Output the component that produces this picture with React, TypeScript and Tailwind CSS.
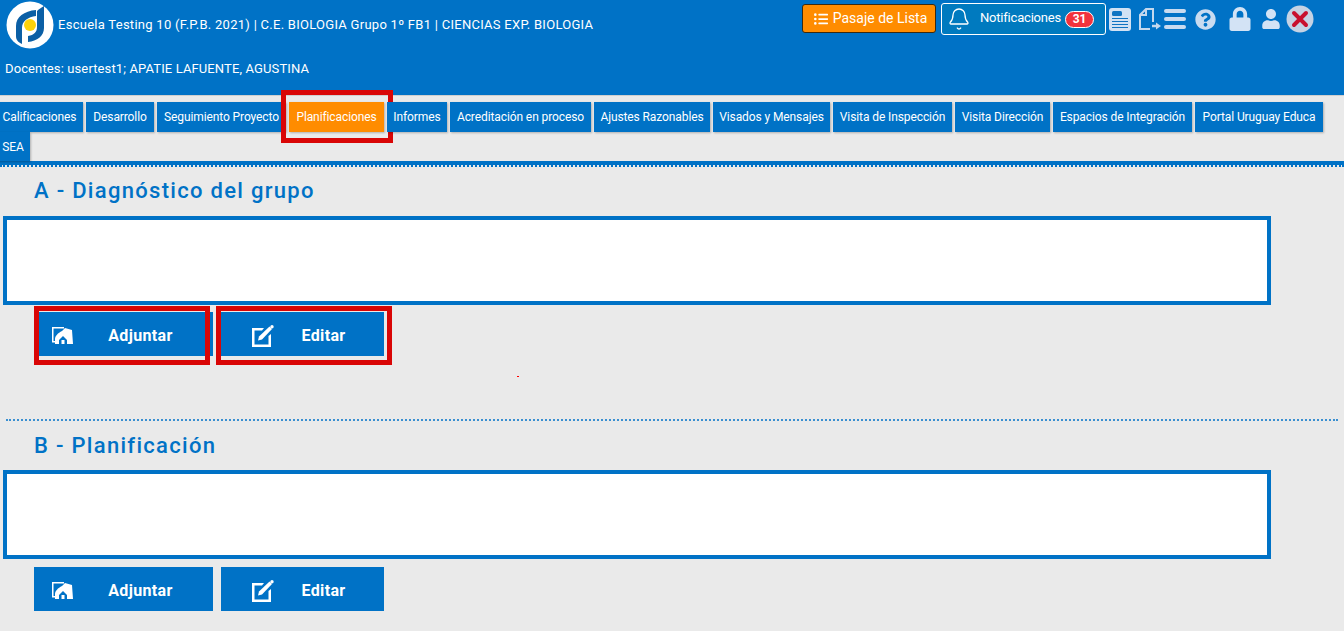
import { Bell } from "lucide-react";
import { FaListUl, FaLock, FaQuestionCircle, FaUser } from "react-icons/fa";

const tabs = [
  { label: "Calificaciones", width: "h-[30px] w-[87px]" },
  { label: "Desarrollo", width: "h-[30px] w-[68px]" },
  { label: "Seguimiento Proyecto", width: "h-[30px] w-[129px]" },
  { label: "Planificaciones", width: "h-[30px] w-[95px]", active: true },
  { label: "Informes", width: "h-[30px] w-[60px]" },
  { label: "Acreditación en proceso", width: "h-[30px] w-[141px]" },
  { label: "Ajustes Razonables", width: "h-[30px] w-[116px]" },
  { label: "Visados y Mensajes", width: "h-[30px] w-[117px]" },
  { label: "Visita de Inspección", width: "h-[30px] w-[119px]" },
  { label: "Visita Dirección", width: "h-[30px] w-[95px]" },
  { label: "Espacios de Integración", width: "h-[30px] w-[139px]" },
  { label: "Portal Uruguay Educa", width: "h-[30px] w-[128px]" },
  { label: "SEA", width: "h-[29px] w-[34px] text-[11px]" },
];

const Logo = () => (
  <svg viewBox="0 0 48 48" className="h-[48px] w-[48px] shrink-0">
    <circle cx="24" cy="24" r="23.500" fill="#fff" />
    <path d="M30 9C18 10 10 16 10 25L10 35C10 39 12 41 16 43L16 27C16 20 22 16 30 15Z" fill="#0b5fa5" />
    <path d="M38 5L38 27C38 35 31 40 22 41L22 35C28 34 31 31 31 26L31 10C33 8 36 6 38 5Z" fill="#0b5fa5" />
    <circle cx="24" cy="24" r="6" fill="#fcd20a" />
  </svg>
);

const AttachIcon = () => (
  <svg viewBox="0 0 21 17" className="block h-[17px] w-[21px] shrink-0" fill="#fff">
    <path d="M0 0H12V1.500H1.500V14H3V15.500H0Z" />
    <path d="M3 17V12C3 9 6 6 10 4L13 1L20 3L21 17H15V13L11 9L7 13V17Z" />
    <path d="M9.500 13H12.500V17H9.500Z" />
  </svg>
);

const EditIcon = () => (
  <svg viewBox="0 0 22 22" className="block h-[22px] w-[22px] shrink-0" fill="#fff">
    <path d="M0 3H12L10 5.500H2.500V19.500H16.500V11L19 9V22H0Z" />
    <path d="M7 11.500L17.500 1.500L20 4L10 14.500L6 15.500Z" />
    <circle cx="20" cy="1.700" r="1.700" />
  </svg>
);

const NewsIcon = () => (
  <svg viewBox="0 0 22 23" className="h-[23px] w-[22px]">
    <rect width="22" height="23" rx="3" fill="#d2e2f4" />
    <rect x="3" y="3" width="10" height="5" rx="1.500" fill="#0f74c2" />
    <path d="M3 10.500h16M3 13.500h16M3 16.500h16M3 19.500h16" stroke="#0f74c2" strokeWidth="1.200" />
  </svg>
);

const ExportIcon = () => (
  <svg viewBox="0 0 23 22" className="h-[22px] w-[23px]" fill="none" stroke="#c3d8ee" strokeWidth="2">
    <path d="M12 21H2V7l6-6h7v13" />
    <path d="M8 1v6H2" />
    <path d="M14 18h5" strokeWidth="2.500" />
    <path d="M18 14.500l5 3.500-5 3.500z" fill="#c3d8ee" stroke="none" />
  </svg>
);

const CloseIcon = () => (
  <svg viewBox="0 0 28 28" className="h-[28px] w-[28px]">
    <circle cx="14" cy="14" r="13.500" fill="#c5d3e4" />
    <path d="M8 8l12 12M20 8L8 20" stroke="#c8102e" strokeWidth="4" strokeLinecap="round" />
  </svg>
);

const Section = ({ title, marked, gap, titleClass }: { title: string; marked?: boolean; gap: string; titleClass: string }) => (
  <section>
    <h2 className={`pl-[34px] text-[22px] font-medium tracking-[1.3px] text-[#0072c6] ${titleClass}`}>{title}</h2>
    <div className="ml-[3px] h-[89px] w-[1268px] border-4 border-[#0072c6] bg-white" />
    <div className={`flex gap-[8px] pl-[34px] ${gap}`}>
      <div className="relative flex h-[44px] w-[179px] items-center bg-[#0072c6] pt-[3px] text-[16px] font-bold tracking-[0.35px] text-white">
        <span className="ml-[18px]"><AttachIcon /></span>
        <span className="flex-1 pr-[5px] text-center">Adjuntar</span>
        {marked && <div className="absolute -top-[6px] -bottom-[9px] left-0 w-[176px] border-[5px] border-[#d90606]" />}
      </div>
      <div className="relative flex h-[44px] w-[163px] items-center bg-[#0072c6] pt-[3px] text-[16px] font-bold tracking-[0.35px] text-white">
        <span className="ml-[31px]"><EditIcon /></span>
        <span className="flex-1 pr-[11px] text-center">Editar</span>
        {marked && <div className="absolute -top-[6px] -bottom-[9px] -left-[5px] w-[176px] border-[5px] border-[#d90606]" />}
      </div>
    </div>
  </section>
);

export default function App() {
  return (
    <div className="h-[631px] w-[1344px] overflow-hidden bg-[#eaeaea] font-['Roboto',sans-serif]">
      <header className="h-[96px] border-b border-[#cfcfcf] bg-[#0072c6] text-[13px] text-white">
        <div className="flex h-[50px] items-start pl-[6px] pr-[30px] pt-[1px]">
          <Logo />
          <span className="ml-[4px] mt-[14px] tracking-[0.27px]">Escuela Testing 10 (F.P.B. 2021) | C.E. BIOLOGIA Grupo 1º FB1 | CIENCIAS EXP. BIOLOGIA</span>
          <div className="ml-auto flex items-start pt-[2px]">
            <button className="mt-[1px] flex h-[29px] w-[134px] items-center justify-center gap-[5px] rounded-[3px] border border-[#3a2a10] bg-[#ff8c00] pl-[3px] text-[14px]">
              <FaListUl className="h-[14px] w-[14px]" />
              Pasaje de Lista
            </button>
            <div className="ml-[5px] flex h-[32px] w-[165px] items-center rounded-[3px] border border-white bg-[#007abf] pl-[5px]">
              <Bell className="h-[24px] w-[24px]" strokeWidth={1.3} />
              <span className="ml-[9px] -mt-[2px] text-[13px] tracking-[-0.2px]">Notificaciones</span>
              <span className="ml-[4px] flex h-[17px] w-[29px] items-center justify-center rounded-full border border-white bg-[#f2333d] text-[12px] font-bold">31</span>
            </div>
            <div className="ml-[3px] mt-[2px] flex items-center">
              <NewsIcon />
              <span className="ml-[7px]"><ExportIcon /></span>
              <span className="ml-[3px] flex w-[22px] flex-col gap-[4px]">
                <i className="h-[4px] rounded-full bg-[#c8dbf0]" />
                <i className="h-[4px] rounded-full bg-[#c8dbf0]" />
                <i className="h-[4px] rounded-full bg-[#c8dbf0]" />
              </span>
              <FaQuestionCircle className="ml-[9px] h-[21px] w-[21px] text-[#c8dbf0]" />
              <FaLock className="ml-[13px] h-[24px] w-[22px] text-[#d3e3f5]" />
              <FaUser className="ml-[10px] h-[20px] w-[20px] text-[#d3e3f5]" />
              <span className="ml-[5px]"><CloseIcon /></span>
            </div>
          </div>
        </div>
        <div className="pl-[5px] pt-[9px] tracking-[0.12px]">Docentes: usertest1; APATIE LAFUENTE, AGUSTINA</div>
      </header>

      <nav className="-ml-[4px] flex w-[1340px] flex-wrap gap-x-[3px] pt-[6px]">
        {tabs.map((tab) => (
          <div
            key={tab.label}
            className={`relative flex items-center justify-center whitespace-nowrap text-[12px] tracking-[-0.1px] text-white shadow-[1px_1px_2px_rgba(0,0,0,0.25)] ${tab.width} ${tab.active ? "bg-[#ff8c00]" : "bg-[#0072c6]"}`}
          >
            {tab.label}
            {tab.active && <div className="absolute -top-[12px] -bottom-[11px] -left-[8px] -right-[9px] border-[5px] border-[#d90606]" />}
          </div>
        ))}
      </nav>
      <div className="h-[4px] bg-[#0072c6]" />
      <div className="h-[2px] border-t-2 border-dotted border-[#0072c6]" />

      <Section title="A - Diagnóstico del grupo" marked gap="mt-[7px]" titleClass="h-[49px] pt-[7px]" />
      <div className="relative mx-[6px] mt-[63px] border-t-2 border-dotted border-[#3a8fd0]">
        <span className="absolute left-[511px] -top-[45px] h-px w-[2px] bg-[#ff0000]" />
      </div>
      <Section title="B - Planificación" gap="mt-[8px]" titleClass="h-[49px] pt-[8px]" />
    </div>
  );
}
